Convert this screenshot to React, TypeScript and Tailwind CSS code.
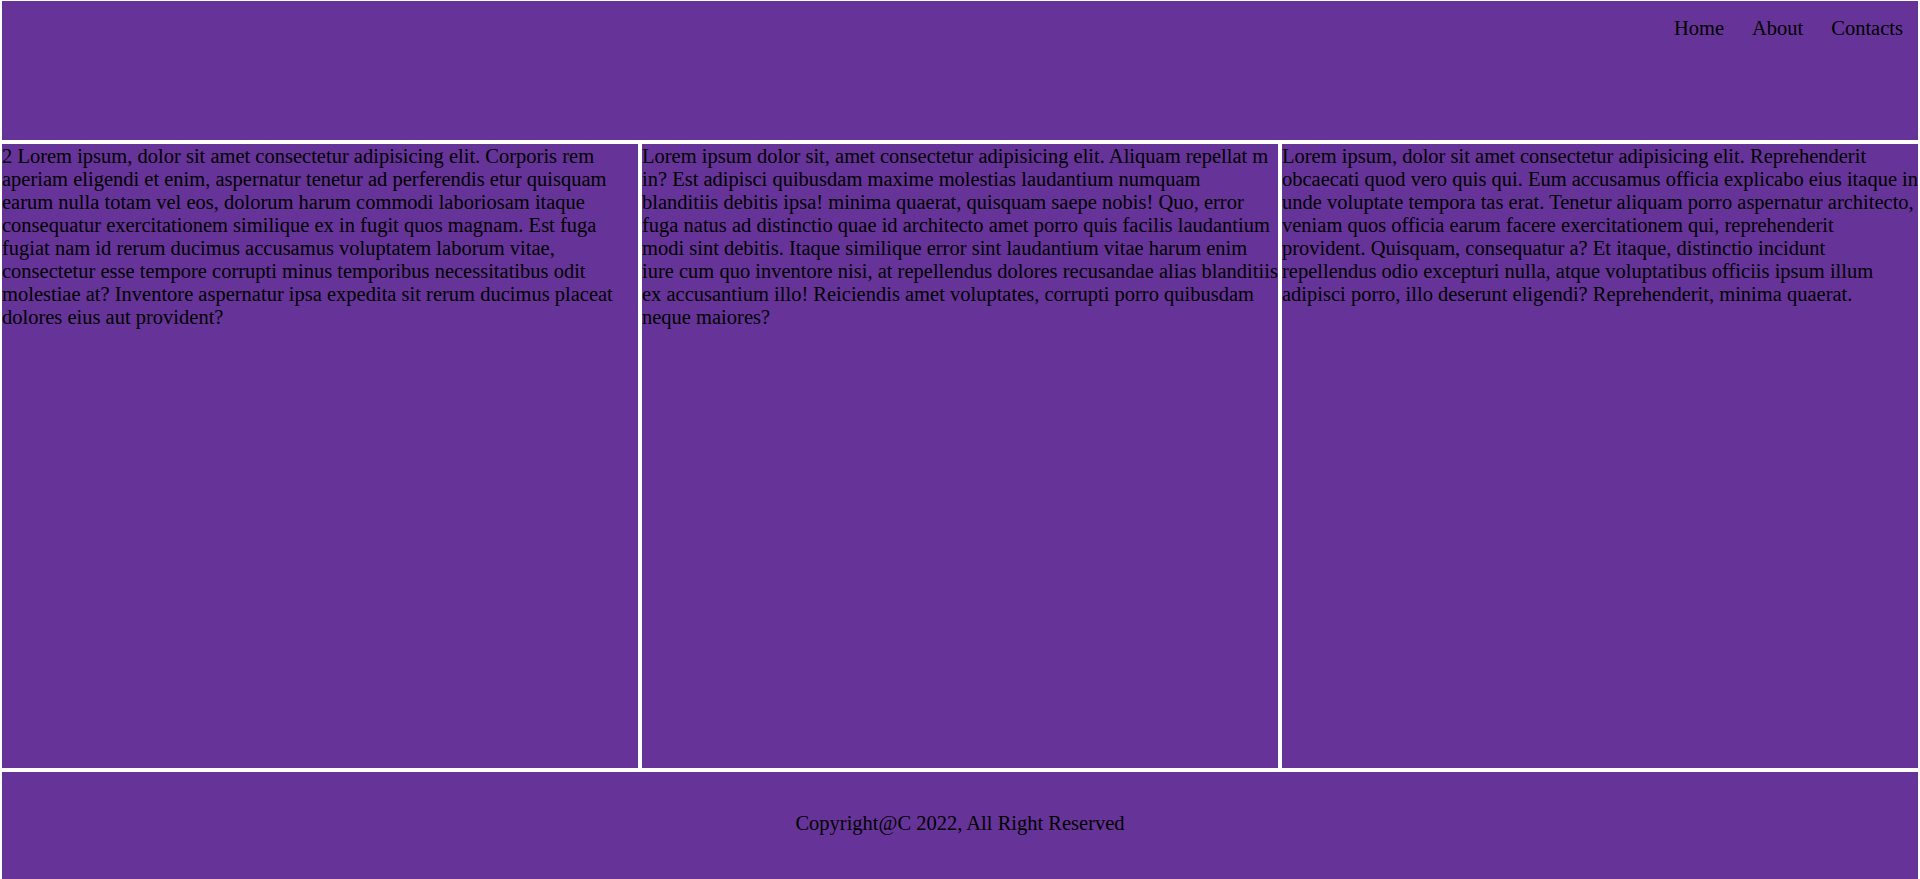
import React from 'react';

const col1 =
  '2 Lorem ipsum, dolor sit amet consectetur adipisicing elit. Corporis rem aperiam eligendi et enim, aspernatur tenetur ad perferendis etur quisquam earum nulla totam vel eos, dolorum harum commodi laboriosam itaque consequatur exercitationem similique ex in fugit quos magnam. Est fuga fugiat nam id rerum ducimus accusamus voluptatem laborum vitae, consectetur esse tempore corrupti minus temporibus necessitatibus odit molestiae at? Inventore aspernatur ipsa expedita sit rerum ducimus placeat dolores eius aut provident?';

const col2 =
  'Lorem ipsum dolor sit, amet consectetur adipisicing elit. Aliquam repellat m in? Est adipisci quibusdam maxime molestias laudantium numquam blanditiis debitis ipsa! minima quaerat, quisquam saepe nobis! Quo, error fuga natus ad distinctio quae id architecto amet porro quis facilis laudantium modi sint debitis. Itaque similique error sint laudantium vitae harum enim iure cum quo inventore nisi, at repellendus dolores recusandae alias blanditiis ex accusantium illo! Reiciendis amet voluptates, corrupti porro quibusdam neque maiores?';

// third column breaks its lines where the source did
const col3Lines = [
  'Lorem ipsum, dolor sit amet consectetur adipisicing elit. Reprehenderit',
  'obcaecati quod vero quis qui. Eum accusamus officia explicabo eius itaque in',
  'unde voluptate tempora tas erat. Tenetur aliquam porro aspernatur architecto,',
  'veniam quos officia earum facere exercitationem qui, reprehenderit',
  'provident. Quisquam, consequatur a? Et itaque, distinctio incidunt',
  'repellendus odio excepturi nulla, atque voluptatibus officiis ipsum illum',
  'adipisci porro, illo deserunt eligendi? Reprehenderit, minima quaerat.',
];

const App = () => {
  return (
    <div
      className="bg-white pt-[1px] px-[2px] flex flex-col gap-[4px] text-black text-[20.5px] leading-[23px]"
      style={{ fontFamily: '"Liberation Serif", "Times New Roman", serif' }}
    >
      <header className="bg-[#663399] h-[139px] pt-[16px] pr-[15px]">
        <ul className="flex justify-end gap-[28px]">
          <li>Home</li>
          <li>About</li>
          <li>Contacts</li>
        </ul>
      </header>

      <main className="grid grid-cols-3 gap-[4px]">
        <div className="bg-[#663399] h-[624px] pt-[1px]">{col1}</div>
        <div className="bg-[#663399] h-[624px] pt-[1px]">{col2}</div>
        <div className="bg-[#663399] h-[624px] pt-[1px] overflow-hidden">
          {col3Lines.map((line, i) => (
            <span key={i} className="block whitespace-nowrap">
              {line}
            </span>
          ))}
        </div>
      </main>

      <footer className="bg-[#663399] h-[139px] pt-[40px] text-center">
        Copyright@C 2022, All Right Reserved
      </footer>
    </div>
  );
};

export default App;
